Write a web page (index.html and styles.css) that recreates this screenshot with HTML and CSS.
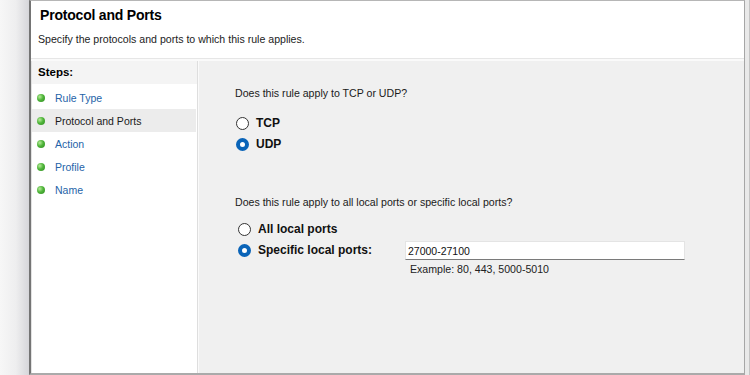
FILE: index.html
```html
<!DOCTYPE html>
<html lang="en">
<head>
  <meta charset="UTF-8" />
  <meta name="viewport" content="width=device-width, initial-scale=1" />
  <title>New Inbound Rule Wizard – Protocol and Ports</title>
  <link rel="stylesheet" href="styles.css">
</head>
<body>

  <!-- desktop edge left of the dialog -->
  <div class="edge-left"></div>

  <div class="wizard">
    <!-- HEADER -->
    <header class="wizard-head">
      <h1>Protocol and Ports</h1>
      <p>Specify the protocols and ports to which this rule applies.</p>
    </header>

    <div class="wizard-body">
      <!-- STEPS -->
      <aside class="steps">
        <div class="steps-title">Steps:</div>
        <ul>
          <li><span class="dot"></span><a href="#">Rule Type</a></li>
          <li class="current"><span class="dot"></span><span>Protocol and Ports</span></li>
          <li><span class="dot"></span><a href="#">Action</a></li>
          <li><span class="dot"></span><a href="#">Profile</a></li>
          <li><span class="dot"></span><a href="#">Name</a></li>
        </ul>
      </aside>

      <!-- PAGE -->
      <main class="page">
        <p class="question">Does this rule apply to TCP or UDP?</p>
        <div class="options">
          <label class="radio"><input type="radio" name="proto" /><span class="mark"></span>TCP</label>
          <label class="radio"><input type="radio" name="proto" checked /><span class="mark"></span>UDP</label>
        </div>

        <p class="question q2">Does this rule apply to all local ports or specific local ports?</p>
        <div class="options ports">
          <label class="radio"><input type="radio" name="ports" /><span class="mark"></span>All local ports</label>
          <div class="port-row">
            <label class="radio"><input type="radio" name="ports" checked /><span class="mark"></span>Specific local ports:</label>
            <div class="port-field">
              <input type="text" value="27000-27100" />
              <span class="hint">Example: 80, 443, 5000-5010</span>
            </div>
          </div>
        </div>
      </main>
    </div>
  </div>

  <div class="edge-right"></div>
</body>
</html>
```

FILE: styles.css
```css
/* Reset & basics */
*, *::before, *::after {
  box-sizing: border-box;
}
body, h1, p, ul {
  margin: 0;
  padding: 0;
}
body {
  font-family: 'Liberation Sans', Arial, sans-serif;
  font-size: 10.6px;
  color: #1a1a1a;
  height: 375px;
  display: flex;
  overflow: hidden;
  background: #f0f0f0;
}
a {
  text-decoration: none;
  color: inherit;
}

/* desktop edges */
.edge-left {
  width: 29px;
  flex-shrink: 0;
  background: linear-gradient(90deg, #f7f7f7 0%, #eeeeef 55%, #d6d6da 100%);
}
.edge-right {
  width: 5px;
  flex-shrink: 0;
  background: #e9e9e9;
  border-right: 1px solid #c4c4c4;
}

/* WIZARD WINDOW */
.wizard {
  flex: 1;
  display: flex;
  flex-direction: column;
  border-left: 2px solid #747474;
  border-top: 1px solid #b6b6b6;
  border-bottom: 2px solid #aaaaaa;
  border-right: 1px solid #a6a6a6;
  background: #fff;
}
.wizard-head {
  height: 58px;
  padding: 6px 0 0 9px;
  background: #fff;
  border-bottom: 1px solid #e6e6e6;
}
.wizard-head h1 {
  font-size: 14px;
  font-weight: 700;
  color: #000;
  line-height: 16px;
  letter-spacing: -0.2px;
}
.wizard-head p {
  margin-top: 10px;
  margin-left: -2px;
  font-size: 10.6px;
  color: #222;
}
.wizard-body {
  flex: 1;
  display: flex;
  padding-top: 2px;
  background: #fafafa;
}

/* STEPS */
.steps {
  width: 167px;
  flex-shrink: 0;
  background: #fff;
  border-left: 1px solid #e2e2e2;
  border-right: 1px solid #dedede;
  margin-right: 1px;
}
.steps-title {
  height: 23px;
  line-height: 23px;
  padding-left: 6px;
  background: #f4f4f4;
  font-weight: 700;
  font-size: 11.5px;
  color: #000;
}
.steps ul {
  list-style: none;
  padding-top: 2px;
}
.steps li {
  height: 23px;
  display: flex;
  align-items: center;
  padding-left: 5px;
  color: #2463a8;
  font-size: 10.5px;
}
.steps li.current {
  background: #ececec;
  color: #1a1a1a;
  margin-right: 1px;
}
.steps li a,
.steps li span:last-child {
  margin-left: 10px;
}
.dot {
  width: 8px;
  height: 8px;
  border-radius: 50%;
  background: radial-gradient(circle at 35% 35%, #b8ec9a 0%, #4fb53a 45%, #2f8a22 100%);
}

/* PAGE */
.page {
  flex: 1;
  background: #f0f0f0;
  padding: 26px 0 0 36px;
}
.question {
  font-size: 10.6px;
  color: #1a1a1a;
}
.q2 {
  margin-top: 45px;
}
.options {
  display: flex;
  flex-direction: column;
  gap: 7px;
  margin-top: 17px;
  padding-left: 1px;
}
.options.ports {
  margin-top: 14px;
  padding-left: 3px;
  gap: 6px;
}
.radio {
  display: flex;
  align-items: center;
  gap: 7px;
  font-weight: 700;
  font-size: 12px;
  color: #111;
  height: 14px;
}
.radio input {
  display: none;
}
.mark {
  width: 13px;
  height: 13px;
  border-radius: 50%;
  border: 1px solid #333;
  background: #fff;
  flex-shrink: 0;
}
.radio input:checked + .mark {
  border: 4px solid #0a64b8;
  background: #fff;
}

.port-row {
  display: flex;
  align-items: flex-start;
}
.port-row .radio {
  width: 167px;
  flex-shrink: 0;
  margin-top: 1px;
}
.port-field {
  display: flex;
  flex-direction: column;
  margin-top: -1px;
}
.port-field input {
  width: 280px;
  height: 19px;
  border: 1px solid #e4e4e4;
  border-bottom-color: #7a7a7a;
  background: #fff;
  font-family: inherit;
  font-size: 10.5px;
  color: #111;
  padding: 0 2px;
  outline: none;
}
.hint {
  margin-top: 3px;
  padding-left: 5px;
  font-size: 10.6px;
  color: #222;
}
```
